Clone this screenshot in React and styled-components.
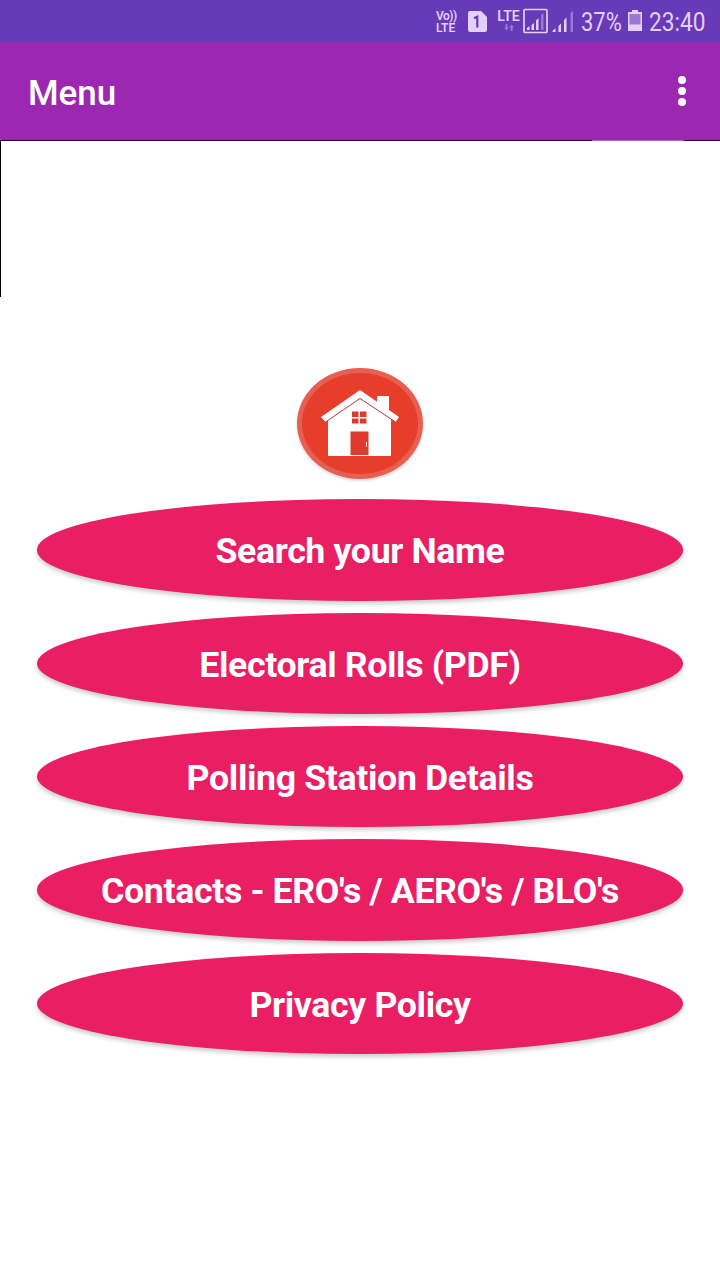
import React from 'react';
import styled, { createGlobalStyle } from 'styled-components';

const GlobalStyle = createGlobalStyle`
  * { box-sizing: border-box; }
  body { margin: 0; background: #fff; font-family: Roboto, "Liberation Sans", sans-serif; }
`;

const Screen = styled.div`
  display: flex;
  flex-direction: column;
  width: 720px;
  height: 1280px;
  overflow: hidden;
  background: #fff;
`;

const StatusBar = styled.div`
  display: flex;
  align-items: center;
  height: 42px;
  padding: 2px 8px 0 436px;
  background: #673ab7;
  color: #e3d0fb;
`;

const VolteLabel = styled.div`
  display: flex;
  flex-direction: column;
  width: 32px;
  flex: none;
  font-size: 12px;
  line-height: 12px;
  font-weight: 600;
`;

const VoiceLine = styled.span`
  letter-spacing: -0.5px;
`;

const SimIcon = styled.svg`
  width: 19px;
  height: 21px;
  flex: none;
  margin: 0 9px 2px 0;
`;

const NetworkLabel = styled.div`
  display: flex;
  flex-direction: column;
  align-items: center;
  width: 25px;
  flex: none;
  margin-bottom: 4px;
  font-size: 14px;
  line-height: 14px;
  font-weight: 600;
`;

const ArrowsIcon = styled.svg`
  width: 12px;
  height: 7px;
  margin-top: 1px;
`;

const SignalIcon = styled.svg`
  width: 58px;
  height: 26px;
  flex: none;
  margin-left: 2px;
  margin-bottom: 2px;
`;

const StatusText = styled.div`
  width: ${(p) => p.$width}px;
  flex: none;
  font-size: 25.5px;
  line-height: 30px;
  white-space: nowrap;
  transform: scaleX(${(p) => p.$stretch});
  transform-origin: left center;
`;

const BatteryIcon = styled.svg`
  width: 14px;
  height: 21px;
  flex: none;
  margin: 0 7px 3px 0;
`;

const AppBar = styled.header`
  display: flex;
  align-items: center;
  justify-content: space-between;
  height: 98px;
  padding: 5px 34px 0 28px;
  background: #9c27b0;
  color: #fff;
`;

const Title = styled.h1`
  margin: 0;
  font-size: 35px;
  line-height: 42px;
  font-weight: 500;
`;

const MoreButton = styled.button`
  display: flex;
  flex-direction: column;
  align-items: center;
  gap: 2.6px;
  margin: 0 0 5px;
  padding: 0;
  border: 0;
  background: none;
`;

const Dot = styled.span`
  width: 8px;
  height: 8px;
  border-radius: 50%;
  background: #fff;
`;

const Banner = styled.section`
  display: flex;
  justify-content: flex-end;
  height: 157px;
  padding-right: 36px;
  border-left: 1px solid #000;
  background: linear-gradient(#21052a, #21052a) top / 100% 1px no-repeat;
`;

const BannerHighlight = styled.div`
  width: 92px;
  height: 1px;
  background: #b067bd;
`;

const Menu = styled.main`
  display: flex;
  flex-direction: column;
  align-items: center;
  padding-top: 71px;
`;

const HomeButton = styled.button`
  display: flex;
  align-items: center;
  justify-content: center;
  width: 126px;
  height: 111px;
  margin: 0 0 20.3px;
  padding: 0 1px 0 0;
  border: 5px solid #e65f51;
  border-radius: 50%;
  background: #e73e2b;
  box-shadow: 0 2px 3px rgba(0, 0, 0, 0.15);
`;

const HouseIcon = styled.svg`
  width: 78px;
  height: 67px;
  flex: none;
`;

const MenuList = styled.nav`
  display: flex;
  flex-direction: column;
  gap: 12px;
`;

const MenuButton = styled.button`
  width: 646px;
  height: 101.35px;
  margin: 0;
  padding: 2.5px 0 0;
  border: 0;
  border-radius: 50%;
  background: #e91e63;
  box-shadow: 0 3px 4px rgba(0, 0, 0, 0.2);
  color: #fff;
  font-family: inherit;
  font-size: 35.7px;
  letter-spacing: -0.36px;
  font-weight: 700;
  line-height: 42px;
  white-space: nowrap;
`;

const items = [
  'Search your Name',
  'Electoral Rolls (PDF)',
  'Polling Station Details',
  "Contacts - ERO's / AERO's / BLO's",
  'Privacy Policy',
];

export default function App() {
  return (
    <Screen>
      <GlobalStyle />
      <StatusBar>
        <VolteLabel>
          <VoiceLine>Vo))</VoiceLine>
          <span>LTE</span>
        </VolteLabel>
        <SimIcon viewBox="0 0 19 21">
          <path d="M2 0H13L19 6V19Q19 21 17 21H2Q0 21 0 19V2Q0 0 2 0Z" fill="#e3d0fb" />
          <path d="M6 7.3L9.3 5.8V16.5" fill="none" stroke="#673ab7" strokeWidth="2.2" />
        </SimIcon>
        <NetworkLabel>
          <span>LTE</span>
          <ArrowsIcon viewBox="0 0 12 8">
            <path d="M2.2 0V4H0.5L3.2 7.5L6 4H4.3V0ZM7.9 8V4H6.2L9 0.5L11.8 4H10.1V8Z" fill="#9b78d4" />
          </ArrowsIcon>
        </NetworkLabel>
        <SignalIcon viewBox="0 0 58 26">
          <rect x="1" y="1.5" width="23" height="23" rx="1" fill="none" stroke="#e3d0fb" strokeWidth="1.7" />
          <path d="M4 22V20L6.5 18V22ZM8.5 22V17L11 15V22ZM13 22V12.5L15.5 10V22Z" fill="#e3d0fb" />
          <path d="M18 22V7L20.5 5V22Z" fill="#9b78d4" />
          <path d="M29.5 24V23L32.5 20V24ZM35.5 24V18L38 15.5V24ZM41 24V12L43.5 9.5V24Z" fill="#e3d0fb" />
          <path d="M47.5 24V5L50 3V24Z" fill="#9b78d4" />
        </SignalIcon>
        <StatusText $width={47} $stretch={0.86}>37%</StatusText>
        <BatteryIcon viewBox="0 0 14 21">
          <path d="M4 0H10V2H14V21H0V2H4Z" fill="#e3d0fb" />
          <rect x="1.5" y="4" width="11" height="10.5" fill="#9b78d4" />
        </BatteryIcon>
        <StatusText $width={56} $stretch={0.89}>23:40</StatusText>
      </StatusBar>
      <AppBar>
        <Title>Menu</Title>
        <MoreButton aria-label="More options">
          <Dot />
          <Dot />
          <Dot />
        </MoreButton>
      </AppBar>
      <Banner>
        <BannerHighlight />
      </Banner>
      <Menu>
        <HomeButton aria-label="Home">
          <HouseIcon viewBox="0 0 78 67">
            <path d="M56 6H68V22L56 13Z" fill="#fff" />
            <path d="M7 28L39 7L70 28V66H7Z" fill="#fff" />
            <path d="M39 0L78 27L74.5 32L39 8.5L4.5 32L0 27Z" fill="#fff" />
            <path d="M4.5 32L39 8.5L74.5 32" fill="none" stroke="#b73640" strokeWidth="1" />
            <path d="M31 21.5H37.5V27H31ZM39 21.5H45.5V27H39ZM31 28.5H37.5V33.5H31ZM39 28.5H45.5V33.5H39Z" fill="#dc3b2e" />
            <rect x="29.5" y="41.5" width="18" height="23.5" fill="#dc3b2e" />
            <path d="M45.5 52V56.5" stroke="#fff" strokeWidth="1" />
          </HouseIcon>
        </HomeButton>
        <MenuList>
          {items.map((label) => (
            <MenuButton key={label}>{label}</MenuButton>
          ))}
        </MenuList>
      </Menu>
    </Screen>
  );
}
